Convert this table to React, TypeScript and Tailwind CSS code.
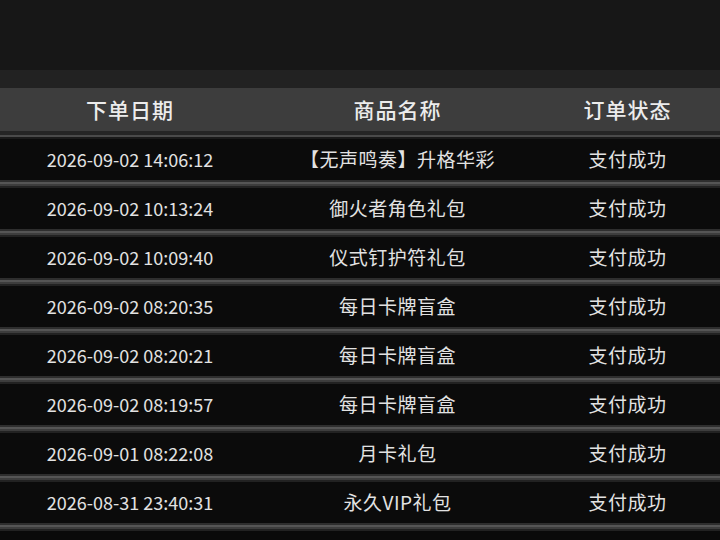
const ORDERS = [
  { date: '2026-09-02 14:06:12', name: '【无声鸣奏】升格华彩', status: '支付成功' },
  { date: '2026-09-02 10:13:24', name: '御火者角色礼包', status: '支付成功' },
  { date: '2026-09-02 10:09:40', name: '仪式钉护符礼包', status: '支付成功' },
  { date: '2026-09-02 08:20:35', name: '每日卡牌盲盒', status: '支付成功' },
  { date: '2026-09-02 08:20:21', name: '每日卡牌盲盒', status: '支付成功' },
  { date: '2026-09-02 08:19:57', name: '每日卡牌盲盒', status: '支付成功' },
  { date: '2026-09-01 08:22:08', name: '月卡礼包', status: '支付成功' },
  { date: '2026-08-31 23:40:31', name: '永久VIP礼包', status: '支付成功' },
];

const COLS = 'grid grid-cols-[260px_275px_185px] items-center text-center';

function Separator() {
  return (
    <div className="flex flex-col">
      <div className="h-[2px] bg-[#2e2e2e]" />
      <div className="h-[2px] bg-[#555555]" />
      <div className="h-[2px] bg-[#3d3d3d]" />
      <div className="h-[2px] bg-[#222222]" />
    </div>
  );
}

export default function App() {
  return (
    <div
      className="flex h-[540px] w-[720px] flex-col overflow-hidden bg-[#0a0a0a]"
      style={{ fontFamily: '"Noto Sans CJK SC", "Noto Sans", sans-serif' }}
    >
      <div className="h-[70px] bg-[#171717]" />
      <div className="h-[18px] bg-[#222222]" />

      {/* 表头 */}
      <div className={`${COLS} h-[43px] bg-[#3d3d3d] text-[21px] font-medium tracking-[1px] text-[#ececec]`}>
        <div>下单日期</div>
        <div>商品名称</div>
        <div>订单状态</div>
      </div>
      <div className="h-[4px] bg-[#252525]" />
      <div className="h-[2px] bg-[#4a4a4a]" />
      <div className="h-[2px] bg-[#1a1a1a]" />

      {ORDERS.map((o) => (
        <div key={o.date}>
          <div className={`${COLS} h-[41px] bg-[#0b0b0b] text-[#e2e2e2]`}>
            <div className="text-[18px] tabular-nums">{o.date}</div>
            <div className="text-[19px] tracking-[0.5px]">{o.name}</div>
            <div className="text-[19px] tracking-[0.5px]">{o.status}</div>
          </div>
          <Separator />
        </div>
      ))}
    </div>
  );
}
